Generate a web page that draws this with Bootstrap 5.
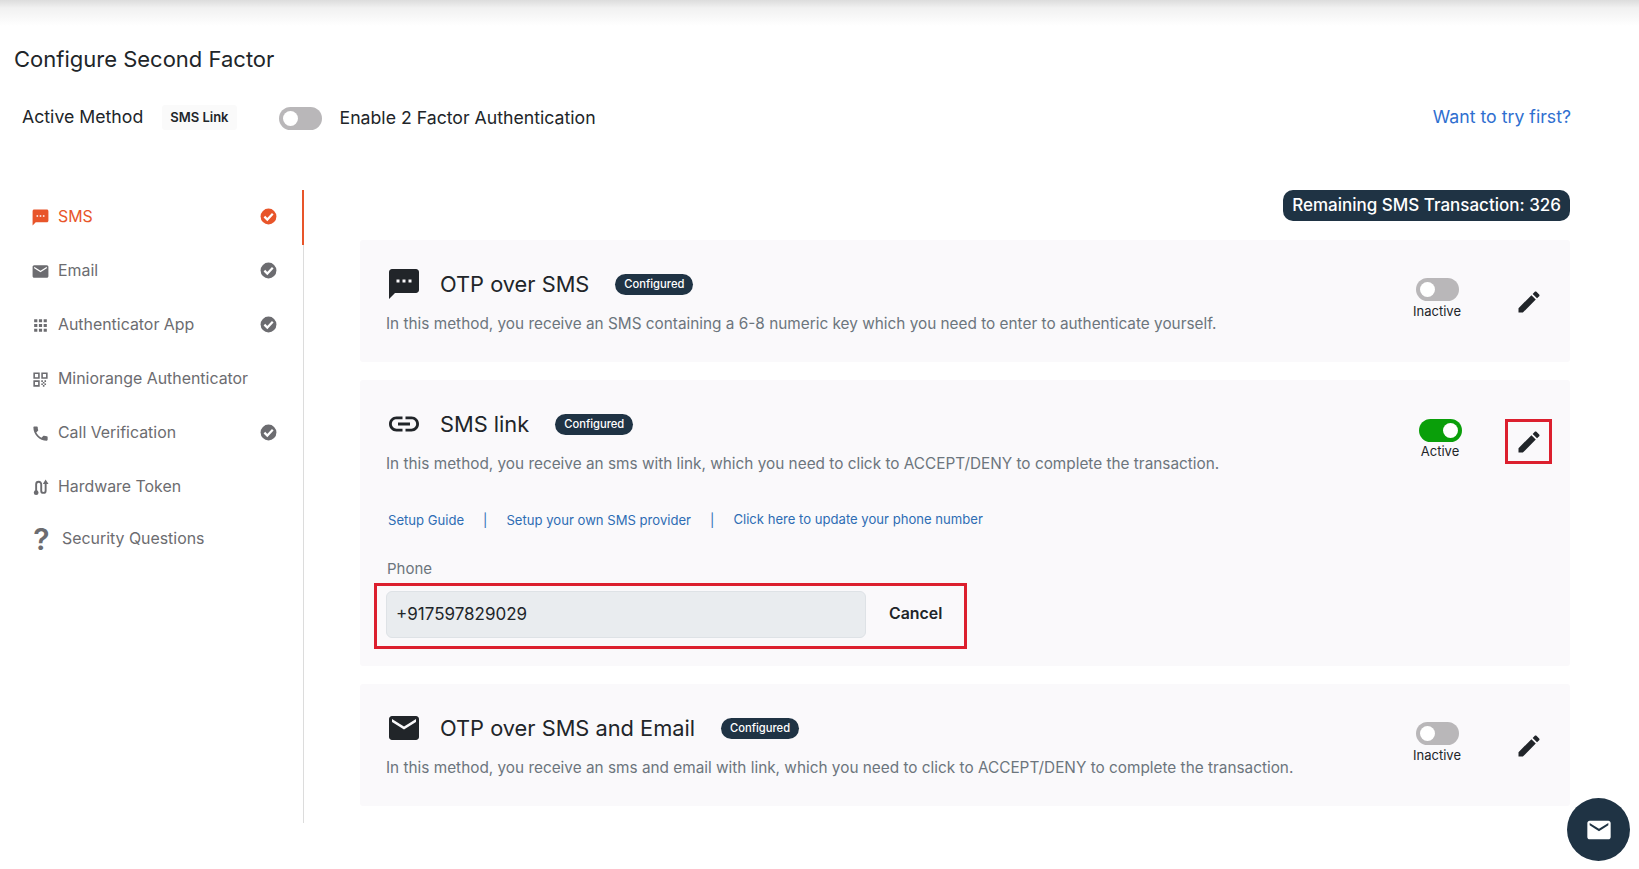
<!DOCTYPE html>
<html lang="en">
<head>
    <meta charset="UTF-8">
    <meta name="viewport" content="width=device-width, initial-scale=1.0">
    <title>Configure Second Factor</title>
    <link href="https://cdn.jsdelivr.net/npm/bootstrap@5.3.0/dist/css/bootstrap.min.css" rel="stylesheet">
    <style>
        body { font-family: Inter, "Noto Sans", sans-serif; color: #212529; background: #fff; overflow: hidden; }
        .top-shade { height: 26px; background: linear-gradient(#dcdcdc 0, #f1f1f1 8px, #fff 100%); }
        .page-title { font-size: 22px; font-weight: 400; margin: 20px 0 0 14px; line-height: 26px; }
        .active-row { margin: 32px 0 0 22px; padding-right: 68px; height: 26px; font-size: 17.7px; }
        .method-chip { font-size: 13px; font-weight: 600; background: #fafafa; padding: 0 8px; line-height: 25px; margin-left: 19px; border-radius: 3px; }
        .enable-label { margin: 2px 0 0 18px; }
        .try-link { color: #2f6fd0; text-decoration: none; }
        .mo-switch { margin: 0; padding: 0; min-height: 0; display: flex; }
        .mo-switch.top-switch { margin: 2px 0 0 42px; }
        .mo-switch .form-check-input {
            width: 43px; height: 23px; margin: 0; border: 0; float: none;
            background-color: #b9b7b9;
            background-image: url("data:image/svg+xml,%3csvg xmlns='http://www.w3.org/2000/svg' viewBox='-4 -4 8 8'%3e%3ccircle r='2.6' fill='%23fff'/%3e%3c/svg%3e");
        }
        .mo-switch .form-check-input:checked { background-color: #0a9f0a; }
        .content-row { margin-top: 60px; }
        .side-nav { width: 304px; height: 633px; border-right: 1px solid #dcdcdc; flex: none; position: relative; }
        .side-nav::before { content: ""; position: absolute; right: -1px; top: 0; width: 2px; height: 55px; background: #e8552a; }
        .side-item { height: 54px; padding: 0 25px 0 31px; color: #6c6c70; font-size: 15.9px; text-decoration: none; }
        .side-item.is-current { color: #e8552a; }
        .side-item svg { fill: currentColor; flex: none; }
        .side-item .side-label { margin-left: 8px; }
        .side-item .side-check { margin-top: -2px; }
        .side-item.is-last { margin-top: -2px; }
        .question-mark { width: 19px; font-size: 30px; font-weight: 600; line-height: 1; text-align: center; margin-left: 1px; }
        .side-item .question-label { margin-left: 11px; }
        .main-pane { padding: 0 69px 0 56px; }
        .remaining-pill { background: #1f3344; color: #fff; font-size: 17px; font-weight: 500; border-radius: 10px; height: 31px; line-height: 31px; padding: 0 9px; }
        .pill-row { margin-bottom: 19px; }
        .method-card { background: #faf9fb; border: 0; border-radius: 3px; padding: 26px 18px 0 26px; margin-bottom: 18px; height: 122px; }
        .method-card.is-tall { height: 286px; }
        .method-title { font-size: 21.8px; font-weight: 400; line-height: 32px; margin: 0; }
        .method-icon { width: 36px; height: 36px; margin: 0 18px 0 0; fill: #212529; flex: none; }
        .cfg-badge { background: #1f3344; color: #fff; font-size: 11.2px; font-weight: 500; border-radius: 11px; padding: 0 9px; line-height: 21px; margin-left: 26px; }
        .method-desc { color: #6c757d; font-size: 15.35px; margin: 12px 0 0; line-height: 20px; }
        .card-side { width: 149px; flex: none; margin-top: 12px; }
        .switch-cell { width: 68px; font-size: 13px; line-height: 16px; }
        .switch-label { margin-top: 2px; }
        .switch-cell.is-on { margin: 1px 0 0 3px; }
        .switch-cell.is-on .switch-label { margin-top: 1px; }
        .pencil-btn { width: 47px; height: 45px; fill: #212529; margin-top: 1px; }
        .is-marked { border: 3px solid #dc1f2e; }
        .guide-links { margin: 36px 0 0 2px; font-size: 13.1px; color: #2e6db4; line-height: 20px; }
        .guide-links a { color: #2e6db4; text-decoration: none; }
        .guide-sep { margin: 0 19px; }
        .guide-raised { margin-top: -1px; }
        .phone-label { color: #6c757d; font-size: 15px; margin: 29px 0 0 1px; line-height: 20px; }
        .phone-box { width: 593px; height: 66px; margin: 4px 0 0 -12px; padding: 0 0 4px 9px; }
        .phone-box .form-control { width: 480px; height: 47px; flex: none; font-size: 17px; color: #212529; background: #e9ecef; padding-left: 9px; }
        .cancel-btn { font-size: 15.9px; font-weight: 600; color: #212529; margin-left: 23px; padding: 0; border: 0; }
        .mail-fab { position: fixed; right: 9px; bottom: 8px; width: 63px; height: 63px; border-radius: 50%; background: #1f3344; border: 0; padding: 0; }
    </style>
</head>
<body>
    <svg width="0" height="0" class="d-block position-absolute">
        <symbol id="i-sms" viewBox="0 0 24 24"><path d="M20 2H4c-1.1 0-1.99.9-1.99 2L2 22l4-4h14c1.1 0 2-.9 2-2V4c0-1.1-.9-2-2-2zM9 11H7V9h2v2zm4 0h-2V9h2v2zm4 0h-2V9h2v2z"/></symbol>
        <symbol id="i-mail" viewBox="0 0 24 24"><path d="M20 4H4c-1.1 0-1.99.9-1.99 2L2 18c0 1.1.9 2 2 2h16c1.1 0 2-.9 2-2V6c0-1.1-.9-2-2-2zm0 4l-8 5-8-5V6l8 5 8-5v2z"/></symbol>
        <symbol id="i-apps" viewBox="0 0 24 24"><path d="M4 8h4V4H4v4zm6 12h4v-4h-4v4zm-6 0h4v-4H4v4zm0-6h4v-4H4v4zm6 0h4v-4h-4v4zm6-10v4h4V4h-4zm-6 4h4V4h-4v4zm6 6h4v-4h-4v4zm0 6h4v-4h-4v4z"/></symbol>
        <symbol id="i-qr" viewBox="0 0 24 24"><path d="M3 11h8V3H3v8zm2-6h4v4H5V5zM3 21h8v-8H3v8zm2-6h4v4H5v-4zM13 3v8h8V3h-8zm6 6h-4V5h4v4zM13 13h2v2h-2zm4 0h2v2h-2zm-2 2h2v2h-2zm-2 2h2v2h-2zm4 0h2v2h-2zm-2 2h2v2h-2z"/></symbol>
        <symbol id="i-phone" viewBox="0 0 24 24"><path d="M6.62 10.79c1.44 2.83 3.76 5.14 6.59 6.59l2.2-2.2c.27-.27.67-.36 1.02-.24 1.12.37 2.33.57 3.57.57.55 0 1 .45 1 1V20c0 .55-.45 1-1 1-9.39 0-17-7.61-17-17 0-.55.45-1 1-1h3.5c.55 0 1 .45 1 1 0 1.25.2 2.45.57 3.57.11.35.03.74-.25 1.02l-2.2 2.2z"/></symbol>
        <symbol id="i-token" viewBox="0 0 24 24"><path d="M6.5 17V8a3.2 3.2 0 0 1 6.4 0v8a2.8 2.8 0 0 0 5.6 0V7" fill="none" stroke="currentColor" stroke-width="2.4"/><circle cx="6.5" cy="18.5" r="3"/><path d="M18.5 2l3.6 5.5h-7.2z"/></symbol>
        <symbol id="i-link" viewBox="0 0 24 24"><path d="M3.9 12c0-1.71 1.39-3.1 3.1-3.1h4V7H7c-2.76 0-5 2.24-5 5s2.24 5 5 5h4v-1.9H7c-1.71 0-3.1-1.39-3.1-3.1zM8 13h8v-2H8v2zm9-6h-4v1.9h4c1.71 0 3.1 1.39 3.1 3.1s-1.39 3.1-3.1 3.1h-4V17h4c2.76 0 5-2.24 5-5s-2.24-5-5-5z"/></symbol>
        <symbol id="i-edit" viewBox="0 0 24 24"><path d="M3 17.25V21h3.75L17.81 9.94l-3.75-3.75L3 17.25zM20.71 7.04c.39-.39.39-1.02 0-1.41l-2.34-2.34c-.39-.39-1.02-.39-1.41 0l-1.83 1.83 3.75 3.75 1.83-1.83z"/></symbol>
        <symbol id="i-check" viewBox="0 0 24 24"><circle cx="12" cy="12" r="10"/><path d="M6.8 12.2l3.7 3.7 6.9-7.4" fill="none" stroke="#fff" stroke-width="2.8"/></symbol>
    </svg>

    <div class="top-shade"></div>
    <h1 class="page-title">Configure Second Factor</h1>

    <div class="active-row d-flex align-items-center">
        <span>Active Method</span>
        <span class="method-chip">SMS Link</span>
        <div class="form-check form-switch mo-switch top-switch"><input class="form-check-input" type="checkbox" role="switch"></div>
        <span class="enable-label">Enable 2 Factor Authentication</span>
        <a class="try-link ms-auto" href="#">Want to try first?</a>
    </div>

    <div class="content-row d-flex">
        <nav class="side-nav">
            <a class="side-item is-current d-flex align-items-center" href="#"><svg width="19" height="19"><use href="#i-sms"/></svg><span class="side-label flex-grow-1">SMS</span><svg class="side-check" width="19" height="19"><use href="#i-check"/></svg></a>
            <a class="side-item d-flex align-items-center" href="#"><svg width="19" height="19"><use href="#i-mail"/></svg><span class="side-label flex-grow-1">Email</span><svg class="side-check" width="19" height="19"><use href="#i-check"/></svg></a>
            <a class="side-item d-flex align-items-center" href="#"><svg width="19" height="19"><use href="#i-apps"/></svg><span class="side-label flex-grow-1">Authenticator App</span><svg class="side-check" width="19" height="19"><use href="#i-check"/></svg></a>
            <a class="side-item d-flex align-items-center" href="#"><svg width="19" height="19"><use href="#i-qr"/></svg><span class="side-label flex-grow-1">Miniorange Authenticator</span></a>
            <a class="side-item d-flex align-items-center" href="#"><svg width="19" height="19"><use href="#i-phone"/></svg><span class="side-label flex-grow-1">Call Verification</span><svg class="side-check" width="19" height="19"><use href="#i-check"/></svg></a>
            <a class="side-item d-flex align-items-center" href="#"><svg width="19" height="19"><use href="#i-token"/></svg><span class="side-label flex-grow-1">Hardware Token</span></a>
            <a class="side-item is-last d-flex align-items-center" href="#"><span class="question-mark">?</span><span class="question-label flex-grow-1">Security Questions</span></a>
        </nav>

        <main class="main-pane flex-grow-1">
            <div class="pill-row d-flex justify-content-end">
                <span class="remaining-pill">Remaining SMS Transaction: 326</span>
            </div>

            <div class="method-card card">
                <div class="d-flex">
                    <div class="flex-grow-1">
                        <div class="d-flex align-items-center">
                            <svg class="method-icon"><use href="#i-sms"/></svg>
                            <h2 class="method-title">OTP over SMS</h2>
                            <span class="cfg-badge">Configured</span>
                        </div>
                        <p class="method-desc">In this method, you receive an SMS containing a 6-8 numeric key which you need to enter to authenticate yourself.</p>
                    </div>
                    <div class="card-side d-flex align-items-start">
                        <div class="switch-cell d-flex flex-column align-items-center">
                            <div class="form-check form-switch mo-switch"><input class="form-check-input" type="checkbox" role="switch"></div>
                            <span class="switch-label">Inactive</span>
                        </div>
                        <div class="pencil-btn d-flex align-items-center justify-content-center ms-auto"><svg width="28" height="28"><use href="#i-edit"/></svg></div>
                    </div>
                </div>
            </div>

            <div class="method-card card is-tall">
                <div class="d-flex">
                    <div class="flex-grow-1">
                        <div class="d-flex align-items-center">
                            <svg class="method-icon"><use href="#i-link"/></svg>
                            <h2 class="method-title">SMS link</h2>
                            <span class="cfg-badge">Configured</span>
                        </div>
                        <p class="method-desc">In this method, you receive an sms with link, which you need to click to ACCEPT/DENY to complete the transaction.</p>
                    </div>
                    <div class="card-side d-flex align-items-start">
                        <div class="switch-cell is-on d-flex flex-column align-items-center">
                            <div class="form-check form-switch mo-switch"><input class="form-check-input" type="checkbox" role="switch" checked></div>
                            <span class="switch-label">Active</span>
                        </div>
                        <div class="pencil-btn is-marked d-flex align-items-center justify-content-center ms-auto"><svg width="28" height="28"><use href="#i-edit"/></svg></div>
                    </div>
                </div>
                <div class="guide-links d-flex">
                    <a href="#">Setup Guide</a><span class="guide-sep">|</span><a href="#">Setup your own SMS provider</a><span class="guide-sep">|</span><a class="guide-raised" href="#">Click here to update your phone number</a>
                </div>
                <div class="phone-label">Phone</div>
                <div class="phone-box is-marked d-flex align-items-center">
                    <input type="text" class="form-control" value="+917597829029" disabled>
                    <button type="button" class="btn cancel-btn">Cancel</button>
                </div>
            </div>

            <div class="method-card card">
                <div class="d-flex">
                    <div class="flex-grow-1">
                        <div class="d-flex align-items-center">
                            <svg class="method-icon"><use href="#i-mail"/></svg>
                            <h2 class="method-title">OTP over SMS and Email</h2>
                            <span class="cfg-badge">Configured</span>
                        </div>
                        <p class="method-desc">In this method, you receive an sms and email with link, which you need to click to ACCEPT/DENY to complete the transaction.</p>
                    </div>
                    <div class="card-side d-flex align-items-start">
                        <div class="switch-cell d-flex flex-column align-items-center">
                            <div class="form-check form-switch mo-switch"><input class="form-check-input" type="checkbox" role="switch"></div>
                            <span class="switch-label">Inactive</span>
                        </div>
                        <div class="pencil-btn d-flex align-items-center justify-content-center ms-auto"><svg width="28" height="28"><use href="#i-edit"/></svg></div>
                    </div>
                </div>
            </div>
        </main>
    </div>

    <button type="button" class="mail-fab d-flex align-items-center justify-content-center"><svg width="28" height="28" fill="#fff"><use href="#i-mail"/></svg></button>

    <script src="https://cdn.jsdelivr.net/npm/bootstrap@5.3.0/dist/js/bootstrap.bundle.min.js"></script>
</body>
</html>
